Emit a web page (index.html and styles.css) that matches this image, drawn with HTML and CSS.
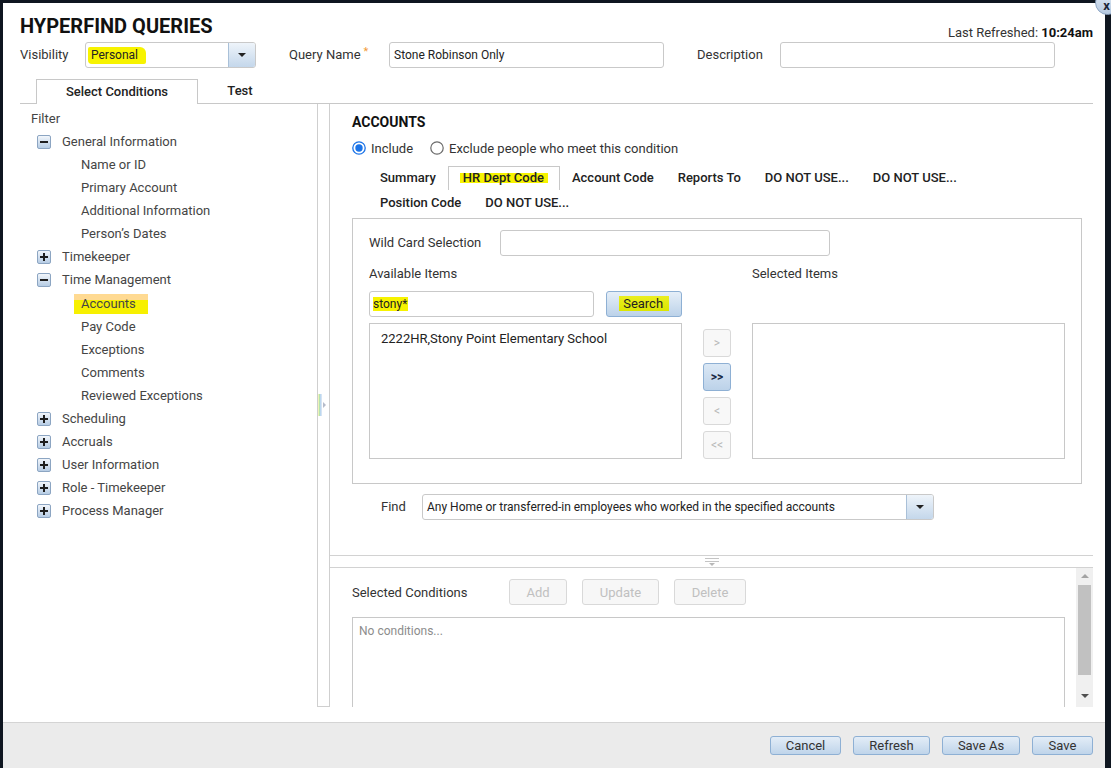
FILE: index.html
```html
<!DOCTYPE html>
<html>
<head>
<meta charset="utf-8">
<title>Hyperfind Queries</title>
<link rel="stylesheet" href="styles.css">
</head>
<body>
<div class="dialog">
  <div class="head">
    <h1 class="title">HYPERFIND QUERIES</h1>
    <div class="refreshed">Last Refreshed: <b>10:24am</b></div>
  </div>
  <div class="formrow">
    <span class="lbl lbl-vis">Visibility</span>
    <div class="select sel-vis"><span class="val"><span class="hl hl-personal">Personal</span></span><span class="dd"></span></div>
    <span class="lbl lbl-qn">Query Name<span class="req">*</span></span>
    <div class="input">Stone Robinson Only</div>
    <span class="lbl lbl-desc">Description</span>
    <div class="input"></div>
  </div>
  <div class="tabs">
    <div class="tab active">Select Conditions</div>
    <div class="tab test">Test</div>
  </div>
  <div class="main">
    <div class="left">
      <div class="row filter">Filter</div>
      <div class="row node"><span class="tg"></span>General Information</div>
      <div class="row leaf">Name or ID</div>
      <div class="row leaf">Primary Account</div>
      <div class="row leaf">Additional Information</div>
      <div class="row leaf">Person’s Dates</div>
      <div class="row node"><span class="tg plus"></span>Timekeeper</div>
      <div class="row node"><span class="tg"></span>Time Management</div>
      <div class="row leaf acc-row"><span class="hl-acc">Accounts</span></div>
      <div class="row leaf">Pay Code</div>
      <div class="row leaf">Exceptions</div>
      <div class="row leaf">Comments</div>
      <div class="row leaf">Reviewed Exceptions</div>
      <div class="row node"><span class="tg plus"></span>Scheduling</div>
      <div class="row node"><span class="tg plus"></span>Accruals</div>
      <div class="row node"><span class="tg plus"></span>User Information</div>
      <div class="row node"><span class="tg plus"></span>Role - Timekeeper</div>
      <div class="row node"><span class="tg plus"></span>Process Manager</div>
    </div>
    <div class="vsplit"><span class="vgrip"></span><span class="vtri"></span></div>
    <div class="right">
      <div class="cond">
        <div class="sec-title">ACCOUNTS</div>
        <div class="radios">
          <span class="radio"><svg width="14" height="14" viewBox="0 0 14 14"><circle cx="7" cy="7" r="6.2" fill="#fff" stroke="#1a73e8" stroke-width="1.3"/><circle cx="7" cy="7" r="3.7" fill="#1a73e8"/></svg>Include</span>
          <span class="radio radio-ex"><svg width="14" height="14" viewBox="0 0 14 14"><circle cx="7" cy="7" r="6.2" fill="#fff" stroke="#6b6b6b" stroke-width="1.2"/></svg>Exclude people who meet this condition</span>
        </div>
        <div class="subtabs">
          <div class="strow">
            <span class="st">Summary</span>
            <span class="st active"><span class="hl hl-hr">HR Dept Code</span></span>
            <span class="st">Account Code</span>
            <span class="st">Reports To</span>
            <span class="st">DO NOT USE...</span>
            <span class="st">DO NOT USE...</span>
          </div>
          <div class="strow strow2">
            <span class="st">Position Code</span>
            <span class="st">DO NOT USE...</span>
          </div>
        </div>
        <div class="box">
          <div class="wild">
            <span class="wild-lbl">Wild Card Selection</span>
            <div class="input wild-inp"></div>
          </div>
          <div class="lists">
            <div class="l-avail">Available Items</div>
            <div class="l-sel">Selected Items</div>
            <div class="searchrow">
              <div class="input search-inp"><span class="hl hl-stony">stony*</span></div>
              <div class="btn-blue search-btn"><span class="hl hl-search">Search</span></div>
            </div>
            <div class="listbox avail-box"><div class="item">2222HR,Stony Point Elementary School</div></div>
            <div class="xfer">
              <div class="xbtn">&gt;</div>
              <div class="xbtn on">&gt;&gt;</div>
              <div class="xbtn">&lt;</div>
              <div class="xbtn">&lt;&lt;</div>
            </div>
            <div class="listbox sel-box"></div>
          </div>
        </div>
        <div class="find">
          <span class="find-lbl">Find</span>
          <div class="select sel-find"><span class="val">Any Home or transferred-in employees who worked in the specified accounts</span><span class="dd"></span></div>
        </div>
      </div>
      <div class="hsplit"><span class="hgrip"></span></div>
      <div class="lower">
        <div class="lower-main">
          <div class="sc-row">
            <span class="sc-lbl">Selected Conditions</span>
            <div class="dbtn b-add">Add</div>
            <div class="dbtn b-upd">Update</div>
            <div class="dbtn b-del">Delete</div>
          </div>
          <div class="conds">No conditions...</div>
        </div>
        <div class="scrollbar">
          <span class="sb-up"></span>
          <span class="sb-thumb"></span>
          <span class="sb-down"></span>
        </div>
      </div>
    </div>
  </div>
  <div class="footer">
    <div class="fbtn f-cancel">Cancel</div>
    <div class="fbtn f-refresh">Refresh</div>
    <div class="fbtn f-saveas">Save As</div>
    <div class="fbtn f-save">Save</div>
  </div>
</div>
<div class="close">x</div>
</body>
</html>
```
FILE: styles.css
```css
* { box-sizing: border-box; }
html, body { margin: 0; height: 100%; }
body {
  background: #0f1620;
  font-family: Roboto, "Liberation Sans", Arial, sans-serif;
  font-size: 13px;
  color: #333;
  overflow: hidden;
  position: relative;
}
.dialog {
  margin: 3px 0 0 3px;
  width: 1102px;
  height: 765px;
  background: #fff;
  display: flex;
  flex-direction: column;
}
.head {
  display: flex;
  justify-content: space-between;
  align-items: flex-end;
  height: 26px;
  margin: 11px 12px 0 17px;
}
.title {
  margin: 0;
  align-self: flex-start;
  font-size: 20px;
  line-height: 24px;
  font-weight: 700;
  color: #111;
}
.refreshed { font-size: 13px; line-height: 16px; color: #333; margin-bottom: -1px; }
.refreshed b { color: #111; }

.formrow {
  display: flex;
  align-items: center;
  height: 26px;
  margin: 2px 12px 0 17px;
}
.lbl { color: #333; white-space: nowrap; line-height: 16px; }
.lbl-vis { width: 65px; }
.lbl-qn { width: 100px; margin-left: 33px; }
.lbl-desc { width: 83px; margin-left: 33px; }
.req { color: #f29a3a; font-size: 11px; line-height: 0; vertical-align: 4px; margin-left: 3px; }

.select {
  display: flex;
  height: 26px;
  border: 1px solid #c9c9c9;
  border-radius: 3px;
  background: #fff;
  overflow: hidden;
}
.select .val {
  flex: 1;
  display: flex;
  align-items: center;
  padding-left: 4px;
  font-size: 12px;
  color: #222;
  white-space: nowrap;
  overflow: hidden;
}
.select .dd {
  width: 27px;
  border-left: 1px solid #a9c0d8;
  background: linear-gradient(#eef4fa, #c4d7eb);
  display: flex;
  align-items: center;
  justify-content: center;
}
.select .dd::before {
  content: "";
  border-left: 4px solid transparent;
  border-right: 4px solid transparent;
  border-top: 4px solid #222;
}
.sel-vis { width: 171px; }
.sel-find { width: 512px; }

.input {
  width: 275px;
  height: 26px;
  border: 1px solid #c9c9c9;
  border-radius: 3px;
  padding-left: 4px;
  font-size: 12px;
  line-height: 24px;
  color: #222;
  white-space: nowrap;
}

.hl { background: #f7f300; }
.hl-personal { padding: 1px 8px 2px 3px; margin-left: -2px; border-radius: 2px 6px 2px 4px; }
.hl-hr { padding: 0 4px 0 3px; background: linear-gradient(transparent 20%, #f7f300 20%, #f7f300 90%, transparent 90%); }
.hl-stony { padding: 0 1px 0 0; margin-left: -1px; }
.hl-search { padding: 0 6px 0 4px; background: linear-gradient(#eaee20, #dbe600); }
.hl-acc {
  padding: 2px 12px 3px 7px;
  margin-left: -7px;
  background: linear-gradient(#ffda92 0, #ffda92 30%, #f7f000 30%, #f7f000 100%);
}

.tabs {
  display: flex;
  height: 25px;
  margin: 11px 12px 0 17px;
  padding-left: 16px;
  border-bottom: 1px solid #c8c8c8;
}
.tab {
  height: 24px;
  line-height: 24px;
  font-weight: 500;
  color: #222;
  text-align: center;
}
.tab.active {
  width: 162px;
  height: 25px;
  margin-bottom: -1px;
  border: 1px solid #c8c8c8;
  border-bottom: none;
  background: #fff;
  line-height: 23px;
}
.tab.test { width: 84px; }

.main {
  display: flex;
  height: 603px;
  margin: 0 12px 0 17px;
}
.left { width: 297px; padding-top: 3px; }
.row { height: 23px; line-height: 23px; color: #454545; white-space: nowrap; }
.acc-row { height: 24px; line-height: 25px; }
.filter { padding-left: 11px; }
.node { display: flex; align-items: center; padding-left: 17px; }
.leaf { padding-left: 61px; }
.tg {
  position: relative;
  width: 14px;
  height: 14px;
  margin-right: 11px;
  border: 1px solid #8ca5c2;
  border-radius: 2px;
  background: linear-gradient(#f2f6fb, #b6cce4);
}
.tg::before {
  content: "";
  position: absolute;
  left: 2px;
  top: 5px;
  width: 8px;
  height: 2px;
  background: #1e1e1e;
}
.tg.plus::after {
  content: "";
  position: absolute;
  left: 5px;
  top: 2px;
  width: 2px;
  height: 8px;
  background: #1e1e1e;
}

.vsplit {
  width: 13px;
  border: 1px solid #cfcfcf;
  border-top: none;
  display: flex;
  align-items: center;
  gap: 1px;
}
.vgrip {
  width: 4px;
  height: 22px;
  background: linear-gradient(90deg, #eef2b8 0 25%, #b5e4ae 25% 50%, #bcd8f0 50% 75%, #d6e4f3 75%);
}
.vtri {
  width: 0;
  height: 0;
  border-top: 3px solid transparent;
  border-bottom: 3px solid transparent;
  border-left: 3px solid #b6bccb;
}

.right { flex: 1; min-width: 0; display: flex; flex-direction: column; }
.cond { padding: 9px 0 35px 22px; }
.sec-title { font-size: 14px; font-weight: 700; line-height: 18px; color: #111; }
.radios { display: flex; align-items: center; height: 18px; margin-top: 8px; color: #333; }
.radio { display: flex; align-items: center; }
.radio svg { margin-right: 5px; }
.radio-ex { margin-left: 17px; }

.subtabs { margin: 9px 0 0 16px; }
.strow { display: flex; height: 24px; }
.strow2 { padding-top: 1px; height: 24px; }
.st {
  height: 24px;
  padding: 0 11px;
  border: 1px solid transparent;
  border-bottom: none;
  line-height: 21px;
  font-weight: 500;
  color: #222;
  white-space: nowrap;
}
.st.active { border-color: #c8c8c8; }

.box {
  width: 730px;
  height: 266px;
  margin-top: 4px;
  border: 1px solid #c8c8c8;
  padding: 10px 0 0 16px;
}
.wild { display: flex; align-items: center; height: 26px; margin-top: 1px; }
.wild-lbl { width: 131px; margin-top: -1px; }
.wild-inp { width: 330px; }
.lists {
  display: grid;
  grid-template-columns: 313px 28px 313px;
  column-gap: 21px;
  margin-top: 10px;
}
.l-avail { grid-column: 1; grid-row: 1; line-height: 16px; }
.l-sel { grid-column: 3; grid-row: 1; line-height: 16px; }
.searchrow { grid-column: 1; grid-row: 2; display: flex; gap: 12px; margin-top: 9px; }
.search-inp { width: 226px; }
.btn-blue {
  border: 1px solid #8eb0d4;
  border-radius: 3px;
  background: linear-gradient(#e6eff8, #bcd2e9);
  text-align: center;
  color: #222;
}
.search-btn { width: 76px; height: 26px; line-height: 24px; }
.listbox { height: 136px; margin-top: 6px; border: 1px solid #c8c8c8; }
.avail-box { grid-column: 1; grid-row: 3; }
.sel-box { grid-column: 3; grid-row: 3; }
.item { padding: 6px 0 0 11px; line-height: 18px; color: #222; }
.xfer { grid-column: 2; grid-row: 3; display: flex; flex-direction: column; gap: 6px; padding-top: 12px; }
.xbtn {
  height: 28px;
  border: 1px solid #d9d9d9;
  border-radius: 3px;
  background: #f8f8f8;
  color: #b8b8b8;
  text-align: center;
  line-height: 26px;
  font-size: 12px;
}
.xbtn.on {
  border-color: #8eb0d4;
  background: linear-gradient(#dbe8f5, #bcd2e9);
  color: #1b2a44;
  font-weight: 700;
}

.find { display: flex; align-items: center; height: 26px; margin-top: 10px; padding-left: 29px; }
.find-lbl { width: 41px; margin-top: -1px; }

.hsplit {
  height: 13px;
  border-top: 1px solid #d2d2d2;
  border-bottom: 1px solid #d2d2d2;
  display: flex;
  justify-content: center;
  padding-top: 2px;
}
.hgrip {
  position: relative;
  width: 14px;
  height: 4px;
  border-top: 1px solid #c4c4c4;
  border-bottom: 1px solid #c4c4c4;
}
.hgrip::after {
  content: "";
  position: absolute;
  left: 4px;
  top: 4px;
  border-left: 3px solid transparent;
  border-right: 3px solid transparent;
  border-top: 3px solid #b8b8b8;
}

.lower { flex: 1; min-height: 0; display: flex; overflow: hidden; }
.lower-main { flex: 1; padding: 11px 0 0 22px; }
.sc-row { display: flex; align-items: center; height: 26px; }
.sc-lbl { width: 157px; }
.dbtn {
  height: 26px;
  border: 1px solid #d9d9d9;
  border-radius: 3px;
  background: #f7f7f7;
  color: #c0c0c0;
  text-align: center;
  line-height: 25px;
}
.b-add { width: 58px; }
.b-upd { width: 77px; margin-left: 15px; }
.b-del { width: 72px; margin-left: 15px; }
.conds {
  width: 713px;
  height: 120px;
  margin-top: 12px;
  border: 1px solid #c8c8c8;
  padding: 6px 0 0 6px;
  font-size: 12px;
  color: #8c8c8c;
}
.scrollbar {
  width: 17px;
  background: #f0f0f0;
  display: flex;
  flex-direction: column;
  align-items: center;
}
.sb-up {
  margin-top: 6px;
  border-left: 4px solid transparent;
  border-right: 4px solid transparent;
  border-bottom: 4px solid #a3a3a3;
}
.sb-thumb { width: 13px; height: 90px; margin-top: 7px; background: #c1c1c1; }
.sb-down {
  margin-top: 19px;
  border-left: 4px solid transparent;
  border-right: 4px solid transparent;
  border-top: 4px solid #505050;
}

.footer {
  flex: 1;
  margin-top: 15px;
  background: #ebebeb;
  border-top: 1px solid #d4d4d4;
  display: flex;
  justify-content: flex-end;
  align-items: flex-start;
  gap: 12px;
  padding: 13px 12px 0 0;
}
.fbtn {
  height: 19px;
  border: 1px solid #8eb0d4;
  border-radius: 3px;
  background: linear-gradient(#e3edf7, #bfd4ea);
  line-height: 17px;
  text-align: center;
  color: #333;
}
.f-cancel { width: 71px; }
.f-refresh { width: 77px; }
.f-saveas { width: 78px; }
.f-save { width: 61px; }

.close {
  position: absolute;
  left: 1095px;
  top: -10px;
  width: 25px;
  height: 25px;
  border-radius: 50%;
  border: 1px solid #8ea6c4;
  background: linear-gradient(#e4ecf6, #b4c8e0);
  color: #1b2536;
  font-weight: 700;
  font-size: 13px;
  line-height: 30px;
  text-align: center;
  padding-right: 2px;
}
```
